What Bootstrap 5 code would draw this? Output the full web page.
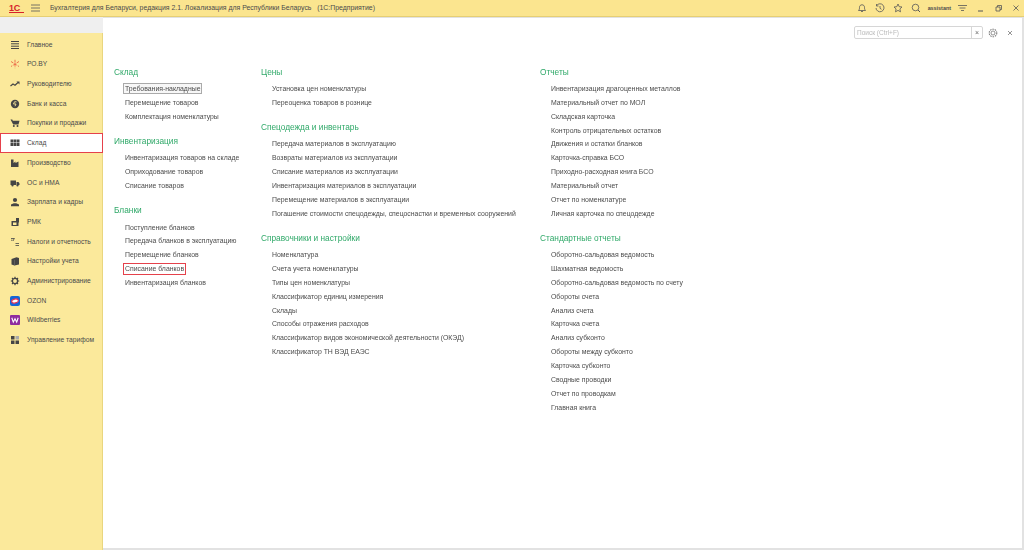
<!DOCTYPE html>
<html lang="ru"><head><meta charset="utf-8"><title>1C</title>
<link href="https://cdn.jsdelivr.net/npm/bootstrap@5.3.0/dist/css/bootstrap.min.css" rel="stylesheet">
<style>
html,body{height:100%;margin:0}
body{width:1024px;height:550px;overflow:hidden;background:#fff;font-family:"Liberation Sans",Arial,sans-serif;font-size:6.9px;line-height:10px;color:#4a4a4a}
.page-wrap{opacity:.995;height:550px}
.topbar{height:17px;background:#fbe58f;border-bottom:1px solid #e6cf73;color:#4a4a4a;padding-left:9px}
.logo1c{color:#d6202a;font-weight:700;font-size:9px;line-height:8px;width:15px;letter-spacing:-.3px;border-bottom:1px solid #d6202a}
.burger{margin:0 10px 0 7px}
.apptitle{font-size:6.9px}
.tools{gap:8px;padding-right:4px}
.userlbl{font-size:5.4px;font-weight:700;color:#4a4a4a;margin-left:-1px}
.shift-a{margin-left:-1.500px}
.shift-b{margin-left:2.500px}
.shell{height:533px}
.leftcol{width:103px;flex:none}
.dots{height:16px;background-color:#efefef;background-image:radial-gradient(#d8d8d8 .5px,transparent .6px);background-size:2px 2px}
.sidebar{flex:1;background:#fbe99b;border-right:1px solid #e9d67e;padding-top:2px}
.sideitem{height:19.65px;padding-left:10px;gap:7px;color:#4a4a4a;font-size:6.7px}
.sideitem svg{flex:none;width:10px;height:10px}
.sideitem.active{background:#fff;border:1px solid #e5404a;padding-left:9px;margin-right:-1px;height:20px;position:relative}
.workspace{flex:1;position:relative;border:1px solid #e2e2e2;border-width:1px 2px 2px 0}
.searchrow{height:15px;margin-top:7px;padding-right:9px;gap:5px}
.searchbox{width:129px;height:13px;border:1px solid #d6d6d6;border-radius:2px;color:#b9b9b9;padding-left:2px;font-size:6.5px;line-height:11px}
.searchx{width:11px;height:11px;border-left:1px solid #d6d6d6;margin-left:auto;color:#666;text-align:center;font-size:7px}
.colsrow{padding-top:27px}
.menu1{width:147px;margin-left:11px;flex:none}
.menu2{width:279px;flex:none}
.grp{margin-bottom:11.6px}
.grp h6{color:#2fa868;font-size:8.3px;line-height:11px;font-weight:400;margin:0 0 5.1px}
.grp div{height:13.85px;line-height:11px;padding-left:11px;color:#4a4a4a;white-space:nowrap}
.linkbox{display:inline-block;line-height:9px;padding:0 1px;margin-left:-2px}
.focusbox{border:1px solid #aaa;background:#f7f7f7}
.redbox{display:inline-block;border:1px solid #e5404a;line-height:10px;padding:0 1px;margin:0 0 0 -2px}
</style></head><body>
<div class="page-wrap">
<header class="topbar d-flex align-items-center">
<span class="logo1c">1С</span>
<svg class="burger" width="9" height="8" viewBox="0 0 9 8"><path d="M0 1h9M0 4h9M0 7h9" stroke="#555" stroke-width=".8"/></svg>
<span class="apptitle">Бухгалтерия для Беларуси, редакция 2.1. Локализация для Республики Беларусь&nbsp;&nbsp;&nbsp;(1С:Предприятие)</span>
<div class="ms-auto d-flex align-items-center tools">
<svg width="10" height="10" viewBox="0 0 10 10"><path d="M1.500 7.500c1-1 1-2 1-3.200C2.500 2.800 3.500 1.800 5 1.800S7.500 2.800 7.500 4.300c0 1.200 0 2.200 1 3.200zM4 8.500h2" fill="none" stroke="#555" stroke-width=".8"/></svg>
<svg width="10" height="10" viewBox="0 0 10 10"><path d="M1.700 2.500A4 4 0 1 1 1 5M1.500 1v2h2M5 3v2.300l1.500 1" fill="none" stroke="#555" stroke-width=".8"/></svg>
<svg width="10" height="10" viewBox="0 0 10 10"><path d="M5 1l1.200 2.700 2.800.3-2.100 1.900.6 2.900L5 7.400 2.500 8.800l.6-2.900L1 4l2.800-.3z" fill="none" stroke="#555" stroke-width=".8"/></svg>
<svg width="10" height="10" viewBox="0 0 10 10"><circle cx="4.500" cy="4.500" r="3.300" fill="none" stroke="#555" stroke-width=".8"/><path d="M7 7l2 2" stroke="#555"/></svg>
<span class="userlbl">assistant</span>
<svg class="shift-a" width="9" height="9" viewBox="0 0 9 9"><path d="M0 1.500h9M1.500 4h6M3 6.500h3" stroke="#555" stroke-width=".8"/></svg>
<svg class="shift-b" width="7" height="8" viewBox="0 0 7 8"><path d="M1 7h5" stroke="#555"/></svg>
<svg class="shift-b" width="7" height="8" viewBox="0 0 7 8"><path d="M1 3h4v4H1zM2.500 3V1.500H6.500V5.500H5" fill="none" stroke="#555" stroke-width=".8"/></svg>
<svg class="shift-b" width="8" height="8" viewBox="0 0 8 8"><path d="M1.500 1.500l5 5M6.500 1.500l-5 5" stroke="#555" stroke-width=".8"/></svg>
</div>
</header>
<div class="shell d-flex">
<div class="leftcol d-flex flex-column">
<div class="dots"></div>
<nav class="sidebar">
<div class="sideitem d-flex align-items-center"><svg viewBox="0 0 10 10"><path d="M1 1.500h8M1 3.800h8M1 6.200h8M1 8.500h8" stroke="#444" stroke-width="1"/></svg>Главное</div>
<div class="sideitem d-flex align-items-center"><svg viewBox="0 0 10 10"><path d="M5 .8v8.400M1 2.500l8 5M9 2.500l-8 5" stroke="#e8563a" stroke-width=".8" stroke-dasharray="2.800 1.200"/></svg>РО.BY</div>
<div class="sideitem d-flex align-items-center"><svg viewBox="0 0 10 10"><path d="M.5 7l2.500-2 2 1.200L8 3.500" fill="none" stroke="#444" stroke-width="1.200"/><path d="M6.500 2.500h3v3z" fill="#444"/></svg>Руководителю</div>
<div class="sideitem d-flex align-items-center"><svg viewBox="0 0 10 10"><circle cx="5" cy="5" r="4.200" fill="#444"/><path d="M6.500 2.800H4.500L3.500 5H6L5 7.200" fill="none" stroke="#fbe99b" stroke-width=".9"/></svg>Банк и касса</div>
<div class="sideitem d-flex align-items-center"><svg viewBox="0 0 10 10"><path d="M.5 1.500h1.800l.5 1.200H9.500L8.500 6.500H3.200z" fill="#444"/><circle cx="3.800" cy="8" r="1" fill="#444"/><circle cx="7.500" cy="8" r="1" fill="#444"/></svg>Покупки и продажи</div>
<div class="sideitem active d-flex align-items-center"><svg viewBox="0 0 10 10"><path d="M.5 1.500h2.800v3H.5zM3.700 1.500h2.600v3H3.700zM6.700 1.500h2.800v3H6.700zM.5 5.100h2.800v3H.5zM3.700 5.100h2.600v3H3.700zM6.700 5.100h2.800v3H6.700z" fill="#444"/></svg>Склад</div>
<div class="sideitem d-flex align-items-center"><svg viewBox="0 0 10 10"><path d="M1 9V1.500h2.500V5l2-1.500V5l3-1.500V9z" fill="#444"/></svg>Производство</div>
<div class="sideitem d-flex align-items-center"><svg viewBox="0 0 10 10"><path d="M.5 2.500h5.500v4.500H.5zM6.500 4h2l1 1.500V7h-3z" fill="#444"/><circle cx="2.500" cy="7.500" r="1.100" fill="#444"/><circle cx="7.500" cy="7.500" r="1.100" fill="#444"/></svg>ОС и НМА</div>
<div class="sideitem d-flex align-items-center"><svg viewBox="0 0 10 10"><circle cx="5" cy="3" r="2.100" fill="#444"/><path d="M1 9.200V7.500l2.800-1.300h2.400L9 7.500v1.700z" fill="#444"/></svg>Зарплата и кадры</div>
<div class="sideitem d-flex align-items-center"><svg viewBox="0 0 10 10"><path d="M1.500 4H6V1h3v4.500h-.5V9h-7z" fill="#444"/><path d="M3 5.500h3.500V8H3z" fill="#fbe99b"/></svg>РМК</div>
<div class="sideitem d-flex align-items-center"><svg viewBox="0 0 10 10"><path d="M1 1.500h3M1 3.200h1.500M5.500 6.500h3.500M5.500 8.500h3.500M4.500 1L3 4" stroke="#444" stroke-width=".8"/></svg>Налоги и отчетность</div>
<div class="sideitem d-flex align-items-center"><svg viewBox="0 0 10 10"><path d="M1.500 3l5-1.700L9 2v6.500l-4.500 1-3-1z" fill="#444"/><path d="M4.500 3.700v5.800" stroke="#777" stroke-width=".5"/></svg>Настройки учета</div>
<div class="sideitem d-flex align-items-center"><svg viewBox="0 0 10 10"><circle cx="5" cy="5" r="2.600" fill="none" stroke="#444" stroke-width="1.300"/><path d="M5 .8v1.400M5 7.800v1.400M.8 5h1.400M7.800 5h1.400M2 2l1 1M7 7l1 1M8 2L7 3M3 7L2 8" stroke="#444" stroke-width="1.200"/></svg>Администрирование</div>
<div class="sideitem d-flex align-items-center"><svg viewBox="0 0 10 10"><rect width="10" height="10" rx="2" fill="#1465d8"/><ellipse cx="5" cy="5" rx="3.400" ry="2" fill="#fff" stroke="#e8304f" stroke-width="1.200" transform="rotate(-12 5 5)"/></svg>OZON</div>
<div class="sideitem d-flex align-items-center"><svg viewBox="0 0 10 10"><rect width="10" height="10" rx="1" fill="#8f2a9e"/><path d="M1.800 2.800l1.500 4.400L5 3.800l1.700 3.400 1.500-4.400" fill="none" stroke="#fff" stroke-width="1.100"/></svg>Wildberries</div>
<div class="sideitem d-flex align-items-center"><svg viewBox="0 0 10 10"><path d="M1 1h3.500v3.500H1zM1 5.500h3.500V9H1zM5.500 5.500H9V9H5.500z" fill="#444"/><path d="M5.500 1H9v3.500H5.500z" fill="#aaa"/></svg>Управление тарифом</div>
</nav>
</div>
<main class="workspace">
<div class="searchrow d-flex align-items-center justify-content-end">
<div class="searchbox d-flex">Поиск (Ctrl+F)<span class="searchx">×</span></div>
<svg width="10" height="10" viewBox="0 0 10 10"><circle cx="5" cy="5" r="2" fill="none" stroke="#777" stroke-width=".8"/><circle cx="5" cy="5" r="3.800" fill="none" stroke="#777" stroke-width="1.100" stroke-dasharray="1.500 .9"/></svg>
<svg class="ms-1" width="6" height="6" viewBox="0 0 6 6"><path d="M1 1l4 4M5 1L1 5" stroke="#777" stroke-width=".8"/></svg>
</div>
<div class="colsrow d-flex">
<div class="menu1">
<section class="grp"><h6>Склад</h6>
<div><span class="linkbox focusbox">Требования-накладные</span></div><div>Перемещение товаров</div><div>Комплектация номенклатуры</div></section>
<section class="grp"><h6>Инвентаризация</h6>
<div>Инвентаризация товаров на складе</div><div>Оприходование товаров</div><div>Списание товаров</div></section>
<section class="grp"><h6>Бланки</h6>
<div>Поступление бланков</div><div>Передача бланков в эксплуатацию</div><div>Перемещение бланков</div><div><span class="redbox">Списание бланков</span></div><div>Инвентаризация бланков</div></section>
</div>
<div class="menu2">
<section class="grp"><h6>Цены</h6>
<div>Установка цен номенклатуры</div><div>Переоценка товаров в рознице</div></section>
<section class="grp"><h6>Спецодежда и инвентарь</h6>
<div>Передача материалов в эксплуатацию</div><div>Возвраты материалов из эксплуатации</div><div>Списание материалов из эксплуатации</div><div>Инвентаризация материалов в эксплуатации</div><div>Перемещение материалов в эксплуатации</div><div>Погашение стоимости спецодежды, спецоснастки и временных сооружений</div></section>
<section class="grp"><h6>Справочники и настройки</h6>
<div>Номенклатура</div><div>Счета учета номенклатуры</div><div>Типы цен номенклатуры</div><div>Классификатор единиц измерения</div><div>Склады</div><div>Способы отражения расходов</div><div>Классификатор видов экономической деятельности (ОКЭД)</div><div>Классификатор ТН ВЭД ЕАЭС</div></section>
</div>
<div class="menu3">
<section class="grp"><h6>Отчеты</h6>
<div>Инвентаризация драгоценных металлов</div><div>Материальный отчет по МОЛ</div><div>Складская карточка</div><div>Контроль отрицательных остатков</div><div>Движения и остатки бланков</div><div>Карточка-справка БСО</div><div>Приходно-расходная книга БСО</div><div>Материальный отчет</div><div>Отчет по номенклатуре</div><div>Личная карточка по спецодежде</div></section>
<section class="grp"><h6>Стандартные отчеты</h6>
<div>Оборотно-сальдовая ведомость</div><div>Шахматная ведомость</div><div>Оборотно-сальдовая ведомость по счету</div><div>Обороты счета</div><div>Анализ счета</div><div>Карточка счета</div><div>Анализ субконто</div><div>Обороты между субконто</div><div>Карточка субконто</div><div>Сводные проводки</div><div>Отчет по проводкам</div><div>Главная книга</div></section>
</div>
</div>
</main>
</div>
</div>
<script src="https://cdn.jsdelivr.net/npm/bootstrap@5.3.0/dist/js/bootstrap.bundle.min.js"></script>
</body></html>
